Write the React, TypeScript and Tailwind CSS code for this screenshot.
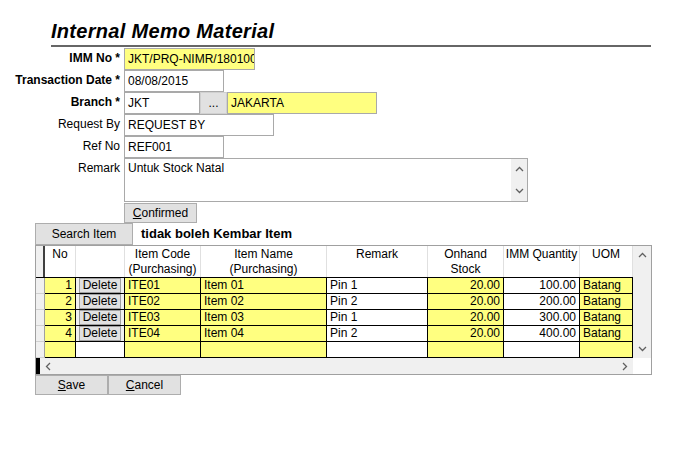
import React from 'react';

const font = { fontFamily: '"Liberation Sans", Arial, sans-serif' };

interface Row {
    no: number,
    code: string,
    name: string,
    remark: string,
    onhand: string,
    qty: string,
    uom: string
};

const rows: Row[] = [
    { no: 1, code: "ITE01", name: "Item 01", remark: "Pin 1", onhand: "20.00", qty: "100.00", uom: "Batang" },
    { no: 2, code: "ITE02", name: "Item 02", remark: "Pin 2", onhand: "20.00", qty: "200.00", uom: "Batang" },
    { no: 3, code: "ITE03", name: "Item 03", remark: "Pin 1", onhand: "20.00", qty: "300.00", uom: "Batang" },
    { no: 4, code: "ITE04", name: "Item 04", remark: "Pin 2", onhand: "20.00", qty: "400.00", uom: "Batang" }
];

const cols = "grid-cols-[9px_31px_49px_76px_126px_101px_76px_76px_53px]";

function Label({ text, bold }: { text: string, bold?: boolean }) {
    return (
        <div className={`w-[124px] shrink-0 pr-[4px] text-right leading-[20px] ${bold ? "font-bold" : ""}`}>
            {text}
        </div>
    );
}

function Box({ w, value, yellow }: { w: string, value: string, yellow?: boolean }) {
    return (
        <div className={`${w} h-[22px] border border-[#a9a9a9] px-[3px] leading-[20px] whitespace-nowrap overflow-hidden ${yellow ? "bg-[#ffff80]" : "bg-white"}`}>
            {value}
        </div>
    );
}

function Btn({ w, h, children }: { w: string, h: string, children: React.ReactNode }) {
    return (
        <div className={`${w} ${h} flex items-center justify-center bg-[#e1e1e1] border border-[#adadad]`}>
            {children}
        </div>
    );
}

function Up() {
    return (
        <svg width="9" height="6" viewBox="0 0 9 6"><path d="M1 5 L4.5 1.5 L8 5" fill="none" stroke="#606060" strokeWidth="1.3" /></svg>
    );
}

function Down() {
    return (
        <svg width="9" height="6" viewBox="0 0 9 6"><path d="M1 1 L4.5 4.5 L8 1" fill="none" stroke="#606060" strokeWidth="1.3" /></svg>
    );
}

function Left() {
    return (
        <svg width="6" height="9" viewBox="0 0 6 9"><path d="M5 1 L1.5 4.5 L5 8" fill="none" stroke="#606060" strokeWidth="1.3" /></svg>
    );
}

function Right() {
    return (
        <svg width="6" height="9" viewBox="0 0 6 9"><path d="M1 1 L4.5 4.5 L1 8" fill="none" stroke="#606060" strokeWidth="1.3" /></svg>
    );
}

function DataRow({ row }: { row?: Row }) {
    const cell = "h-[16px] border-r border-b border-black px-[3px] leading-[15px] whitespace-nowrap overflow-hidden";
    return (
        <div className={`grid ${cols}`}>
            <div className="h-[16px] bg-[#f0f0f0] border-r border-[#a0a0a0] border-b border-b-[#d0d0d0]"></div>
            <div className={`${cell} bg-[#ffff80] text-right`}>{row?.no}</div>
            <div className={`${cell} ${row ? "bg-[#f0f0f0] p-0" : "bg-white"}`}>
                {row && (
                    <div className="h-[15px] bg-[#e1e1e1] border border-[#a0a0a0] flex items-center justify-center leading-[13px]">Delete</div>
                )}
            </div>
            <div className={`${cell} bg-[#ffff80]`}>{row?.code}</div>
            <div className={`${cell} bg-[#ffff80]`}>{row?.name}</div>
            <div className={`${cell} bg-white`}>{row?.remark}</div>
            <div className={`${cell} bg-[#ffff80] text-right`}>{row?.onhand}</div>
            <div className={`${cell} bg-white text-right`}>{row?.qty}</div>
            <div className={`${cell} bg-[#ffff80]`}>{row?.uom}</div>
        </div>
    );
}

function ItemGrid() {
    const head = "h-[31px] border-r border-[#e0e0e0] text-center leading-[15px] pt-[1px]";
    return (
        <div className="ml-[35px] w-[617px] border border-[#a0a0a0] bg-white">
            <div className="flex">
                <div className="flex flex-col">
                    <div className={`grid ${cols} border-b border-black`}>
                        <div className="h-[31px] bg-[#f0f0f0] border-r-2 border-[#404040]"></div>
                        <div className={head}>No</div>
                        <div className={head}></div>
                        <div className={head}>Item Code<br />(Purchasing)</div>
                        <div className={head}>Item Name<br />(Purchasing)</div>
                        <div className={head}>Remark</div>
                        <div className={head}>Onhand<br />Stock</div>
                        <div className={`${head} whitespace-nowrap`}>IMM Quantity</div>
                        <div className={head}>UOM</div>
                    </div>
                    {rows.map((r) => <DataRow key={`row-${r.no}`} row={r} />)}
                    <DataRow />
                </div>
                <div className="w-[19px] bg-[#f0f0f0] flex flex-col items-center justify-between py-[6px]">
                    <Up />
                    <Down />
                </div>
            </div>
            <div className="flex h-[16px]">
                <div className="w-[4px] bg-black"></div>
                <div className="w-[593px] bg-[#f0f0f0] flex items-center justify-between px-[5px]">
                    <Left />
                    <Right />
                </div>
                <div className="w-[18px] bg-white"></div>
            </div>
        </div>
    );
}

function App() {
    return (
        <div className="w-[700px] h-[475px] bg-white text-[12px] text-black overflow-hidden" style={font}>
            <div className="pl-[51px] pt-[19px]">
                <div className="text-[20px] font-bold italic leading-[24px] tracking-[0.3px]">Internal Memo Material</div>
                <div className="mt-[2px] w-[600px] h-[2px] bg-[#666666]"></div>
            </div>
            <div className="mt-[1px] flex flex-col">
                <div className="flex h-[22px]">
                    <Label text="IMM No *" bold />
                    <Box w="w-[131px]" value="JKT/PRQ-NIMR/18010001" yellow />
                </div>
                <div className="flex h-[22px]">
                    <Label text="Transaction Date *" bold />
                    <Box w="w-[100px]" value="08/08/2015" />
                </div>
                <div className="flex h-[22px]">
                    <Label text="Branch *" bold />
                    <Box w="w-[76px]" value="JKT" />
                    <div className="w-[27px] h-[22px] bg-[#e1e1e1] border border-[#d0d0d0] text-center leading-[20px]">...</div>
                    <Box w="w-[150px]" value="JAKARTA" yellow />
                </div>
                <div className="flex h-[22px]">
                    <Label text="Request By" />
                    <Box w="w-[150px]" value="REQUEST BY" />
                </div>
                <div className="flex h-[22px]">
                    <Label text="Ref No" />
                    <Box w="w-[100px]" value="REF001" />
                </div>
                <div className="flex">
                    <Label text="Remark" />
                    <div className="w-[404px] h-[44px] border border-[#a9a9a9] flex">
                        <div className="flex-1 px-[3px] pt-[2px] leading-[15px]">Untuk Stock Natal</div>
                        <div className="w-[16px] bg-[#f0f0f0] flex flex-col items-center justify-between py-[7px]">
                            <Up />
                            <Down />
                        </div>
                    </div>
                </div>
                <div className="flex mt-[1px]">
                    <div className="w-[124px]"></div>
                    <Btn w="w-[73px]" h="h-[20px]"><span><u>C</u>onfirmed</span></Btn>
                </div>
                <div className="flex items-center ml-[35px]">
                    <Btn w="w-[98px]" h="h-[22px]">Search Item</Btn>
                    <div className="ml-[8px] font-bold text-[13px]">tidak boleh Kembar Item</div>
                </div>
            </div>
            <ItemGrid />
            <div className="flex ml-[35px]">
                <Btn w="w-[73px]" h="h-[20px]"><span><u>S</u>ave</span></Btn>
                <Btn w="w-[73px]" h="h-[20px]"><span><u>C</u>ancel</span></Btn>
            </div>
        </div>
    );
}

export default App;
